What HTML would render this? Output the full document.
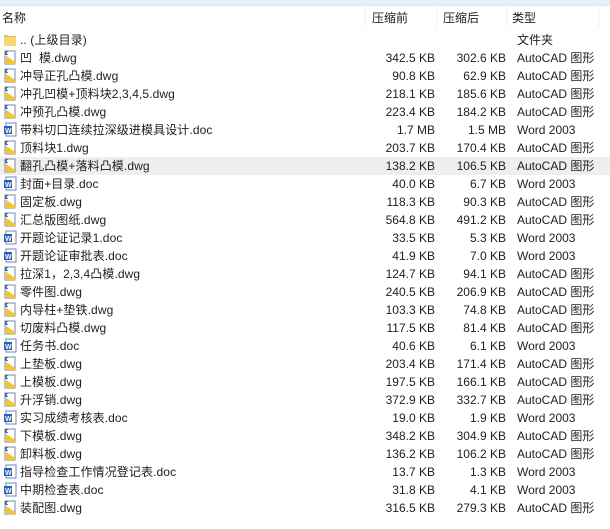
<!DOCTYPE html>
<html><head><meta charset="utf-8"><style>
body{margin:0;width:610px;height:529px;background:#fff;overflow:hidden;font-family:"Liberation Sans","Noto Sans CJK SC",sans-serif;font-size:12px;color:#1e1e1e;position:relative}
.top{position:absolute;left:0;top:0;width:610px;height:5px;background:#e9f0f8;border-bottom:1px solid #dde6f0}
.hdr{position:absolute;top:7px;height:22px;line-height:22px}
.sep{position:absolute;top:5px;width:1px;height:23px;background:#eef1f5}
.row{position:absolute;left:0;width:610px;height:18px;line-height:18px}
.row span{position:absolute;white-space:pre}
.n{left:20px;letter-spacing:0.1px}.a{right:175px}.b{right:104px}.t{left:517px}
.ic{position:absolute;left:3px;top:1px;width:14px;height:15px}
.hl{background:#efefef}
</style></head><body>
<div class="top"></div>
<div class="hdr" style="left:2px">名称</div>
<div class="hdr" style="left:372px">压缩前</div>
<div class="hdr" style="left:443px">压缩后</div>
<div class="hdr" style="left:512px">类型</div>
<div class="sep" style="left:365px"></div><div class="sep" style="left:436px"></div><div class="sep" style="left:506px"></div><div class="sep" style="left:598px"></div>
<div id="rows"></div>
<script>
var F='<svg class="ic" viewBox="0 0 14 15"><path d="M1 3h4l1 1h7v10H1z" fill="#e8c050"/><path d="M1 5h12v9H1z" fill="#f5d77a"/></svg>';
var D='<svg class="ic" viewBox="0 0 14 15"><path d="M2 1h10v13H2z" fill="#fff" stroke="#7a8aa0"/><path d="M2 5l10 7v2H2z" fill="#f2c531"/><path d="M2 1h3v4H2z" fill="#3a6fc0"/><circle cx="5" cy="3" r="1.2" fill="#fff"/></svg>';
var W='<svg class="ic" viewBox="0 0 14 15"><path d="M3 1h10v13H3z" fill="#fff" stroke="#6a8ac0"/><path d="M1 4h8v8H1z" fill="#2b5fb4"/><text x="2" y="11" font-size="7" fill="#fff" font-family="Liberation Sans" font-weight="bold">W</text></svg>';
var r=[["凹  模.dwg","342.5 KB","302.6 KB"],["冲导正孔凸模.dwg","90.8 KB","62.9 KB"],["冲孔凹模+顶料块2,3,4,5.dwg","218.1 KB","185.6 KB"],["冲预孔凸模.dwg","223.4 KB","184.2 KB"],["带料切口连续拉深级进模具设计.doc","1.7 MB","1.5 MB"],["顶料块1.dwg","203.7 KB","170.4 KB"],["翻孔凸模+落料凸模.dwg","138.2 KB","106.5 KB"],["封面+目录.doc","40.0 KB","6.7 KB"],["固定板.dwg","118.3 KB","90.3 KB"],["汇总版图纸.dwg","564.8 KB","491.2 KB"],["开题论证记录1.doc","33.5 KB","5.3 KB"],["开题论证审批表.doc","41.9 KB","7.0 KB"],["拉深1，2,3,4凸模.dwg","124.7 KB","94.1 KB"],["零件图.dwg","240.5 KB","206.9 KB"],["内导柱+垫铁.dwg","103.3 KB","74.8 KB"],["切废料凸模.dwg","117.5 KB","81.4 KB"],["任务书.doc","40.6 KB","6.1 KB"],["上垫板.dwg","203.4 KB","171.4 KB"],["上模板.dwg","197.5 KB","166.1 KB"],["升浮销.dwg","372.9 KB","332.7 KB"],["实习成绩考核表.doc","19.0 KB","1.9 KB"],["下模板.dwg","348.2 KB","304.9 KB"],["卸料板.dwg","136.2 KB","106.2 KB"],["指导检查工作情况登记表.doc","13.7 KB","1.3 KB"],["中期检查表.doc","31.8 KB","4.1 KB"],["装配图.dwg","316.5 KB","279.3 KB"]];
var h='<div class="row" style="top:31px">'+F+'<span class="n">.. (上级目录)</span><span class="t">文件夹</span></div>';
r.forEach(function(x,i){var d=x[0].indexOf('.doc')>0;h+='<div class="row'+(i==6?' hl':'')+'" style="top:'+(49+18*i)+'px">'+(d?W:D)+'<span class="n">'+x[0]+'</span><span class="a">'+x[1]+'</span><span class="b">'+x[2]+'</span><span class="t">'+(d?'Word 2003':'AutoCAD 图形')+'</span></div>';});
document.getElementById('rows').innerHTML=h;
</script>
</body></html>
